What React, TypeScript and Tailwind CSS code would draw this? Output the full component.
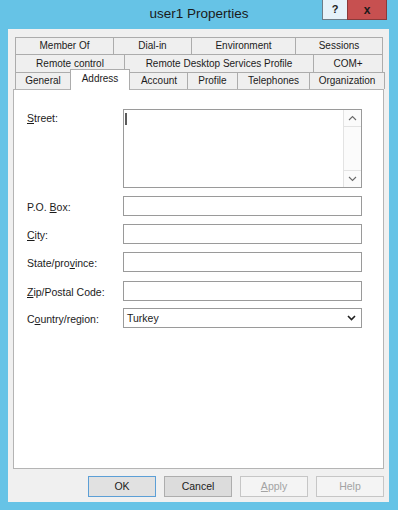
import React from 'react';

const FONT = { fontFamily: '"Liberation Sans", Arial, sans-serif' };

type TabDef = { label: string; w: string };

const row1: TabDef[] = [
  { label: 'Member Of', w: 'w-[99px]' },
  { label: 'Dial-in', w: 'w-[79px]' },
  { label: 'Environment', w: 'w-[105px]' },
  { label: 'Sessions', w: 'w-[88px]' },
];

const row2: TabDef[] = [
  { label: 'Remote control', w: 'w-[110px]' },
  { label: 'Remote Desktop Services Profile', w: 'w-[190px]' },
  { label: 'COM+', w: 'w-[70px]' },
];

const TabRow = ({ tabs, first }: { tabs: TabDef[]; first?: boolean }) => (
  <div className={`flex h-[18px] ${first ? '' : '-mt-px h-[19px]'}`}>
    {tabs.map((t, i) => (
      <div
        key={t.label}
        className={`${t.w} ${i > 0 ? '-ml-px' : ''} flex items-center justify-center border border-[#acacac] bg-[#efefef] text-[10px] leading-none text-[#1b1b1b]`}
      >
        {t.label}
      </div>
    ))}
  </div>
);

const Chevron = ({ up, dark }: { up?: boolean; dark?: boolean }) => (
  <svg width="9" height="6" viewBox="0 0 9 6" className="block">
    <path
      d={up ? 'M1 5 L4.5 1.5 L8 5' : 'M1 1 L4.5 4.5 L8 1'}
      fill="none"
      stroke={dark ? '#202020' : '#6a6a6a'}
      strokeWidth={dark ? 1.6 : 1.1}
    />
  </svg>
);

const Field = ({ label, mt, children }: { label: React.ReactNode; mt: string; children?: React.ReactNode }) => (
  <div className={`flex items-center ${mt}`}>
    <div className="w-[96px] pt-[2px] text-[10.5px] leading-none text-[#1b1b1b]">{label}</div>
    <div className="flex h-[20px] w-[239px] items-center border border-[#9a9a9a] bg-white">{children}</div>
  </div>
);

const U = ({ children }: { children: React.ReactNode }) => <span className="underline underline-offset-1">{children}</span>;

export default function App() {
  return (
    <div className="flex h-[510px] w-[398px] flex-col bg-[#66c3e6]" style={FONT}>
      {/* title bar */}
      <div className="relative flex h-[29px] items-center justify-center">
        <span className="text-[13.5px] text-[#1a1a1a]">user1 Properties</span>
        <div className="absolute right-[11px] top-0 flex">
          <div className="flex h-[20px] w-[26px] items-center justify-center border border-t-0 border-[#6d7d88] bg-[#e6f2f9] text-[11px] font-bold text-[#222]">
            ?
          </div>
          <div className="-ml-px flex h-[20px] w-[40px] items-center justify-center border border-t-0 border-[#8a3a3a] bg-[#c75050] text-[12px] font-bold text-[#1a1a1a]">
            x
          </div>
        </div>
      </div>

      {/* dialog body */}
      <div className="ml-[8px] mr-[9px] flex h-[473px] flex-col bg-[#f0f0f0] pl-[5px] pt-[8px]">
        <div className="pl-[2px]">
          <TabRow tabs={row1} first />
          <TabRow tabs={row2} />
          <div className="-mt-px flex h-[17px] items-start">
            <div className="flex h-[17px] w-[55px] items-center justify-center border-l border-t border-[#acacac] bg-[#efefef] text-[10px] leading-none text-[#1b1b1b]">
              General
            </div>
            <div className="relative z-10 -mt-[3px] flex h-[21px] w-[60px] items-start justify-center border-x border-t border-[#acacac] bg-white pt-[4px] text-[10px] leading-none text-[#1b1b1b]">
              Address
            </div>
            <div className="flex h-[17px] w-[58px] items-center justify-center border-t border-[#acacac] bg-[#efefef] text-[10px] leading-none text-[#1b1b1b]">
              Account
            </div>
            <div className="-ml-px flex h-[17px] w-[51px] items-center justify-center border-x border-t border-[#acacac] bg-[#efefef] text-[10px] leading-none text-[#1b1b1b]">
              Profile
            </div>
            <div className="-ml-px flex h-[17px] w-[73px] items-center justify-center border-x border-t border-[#acacac] bg-[#efefef] text-[10px] leading-none text-[#1b1b1b]">
              Telephones
            </div>
            <div className="-ml-px flex h-[17px] w-[76px] items-center justify-center border-x border-t border-[#acacac] bg-[#efefef] text-[10px] leading-none text-[#1b1b1b]">
              Organization
            </div>
          </div>
        </div>

        {/* address page */}
        <div className="flex h-[380px] w-[371px] flex-col border border-[#b4b4b4] bg-white pl-[13px] pt-[19px]">
          <div className="flex items-start">
            <div className="w-[96px] pt-[4px] text-[10.5px] leading-none text-[#1b1b1b]">
              <U>S</U>treet:
            </div>
            <div className="flex h-[79px] w-[239px] border border-[#9a9a9a] bg-white">
              <div className="flex-1 pl-[1px] pt-[3px]">
                <div className="h-[12px] w-[2px] bg-[#5c5c5c]" />
              </div>
              <div className="flex w-[18px] flex-col border-l border-[#e3e3e3] bg-[#fbfbfb]">
                <div className="flex h-[17px] items-center justify-center border-b border-[#e3e3e3]">
                  <Chevron up />
                </div>
                <div className="flex-1" />
                <div className="flex h-[17px] items-center justify-center border-t border-[#e3e3e3]">
                  <Chevron />
                </div>
              </div>
            </div>
          </div>

          <Field label={<>P.O. <U>B</U>ox:</>} mt="mt-[8px]" />
          <Field label={<><U>C</U>ity:</>} mt="mt-[8px]" />
          <Field label={<>State/pro<U>v</U>ince:</>} mt="mt-[8px]" />
          <Field label={<><U>Z</U>ip/Postal Code:</>} mt="mt-[9px]" />
          <Field label={<>C<U>o</U>untry/region:</>} mt="mt-[7px]">
            <span className="flex-1 pl-[3px] text-[10.5px] leading-none text-[#1b1b1b]">Turkey</span>
            <span className="pr-[5px]">
              <Chevron dark />
            </span>
          </Field>
        </div>

        {/* buttons */}
        <div className="mt-[7px] flex w-[371px] justify-end gap-[8px]">
          <div className="flex h-[21px] w-[68px] items-center justify-center border border-[#5c9fd6] bg-[#e1e1e1] text-[10.5px] text-[#1b1b1b]">
            OK
          </div>
          <div className="flex h-[21px] w-[68px] items-center justify-center border border-[#adadad] bg-[#dcdcdc] text-[10.5px] text-[#1b1b1b]">
            Cancel
          </div>
          <div className="flex h-[21px] w-[68px] items-center justify-center border border-[#c6c6c6] bg-[#f4f4f4] text-[10.5px] text-[#a3a3a3]">
            <span><U>A</U>pply</span>
          </div>
          <div className="flex h-[21px] w-[68px] items-center justify-center border border-[#c6c6c6] bg-[#f4f4f4] text-[10.5px] text-[#a3a3a3]">
            Help
          </div>
        </div>
      </div>
    </div>
  );
}
